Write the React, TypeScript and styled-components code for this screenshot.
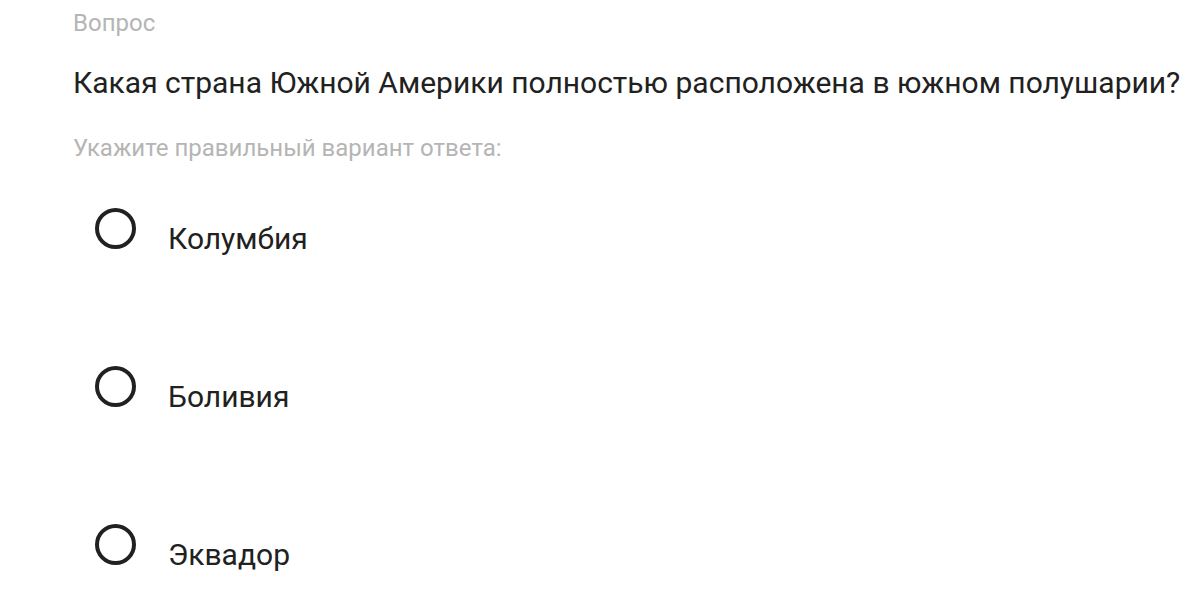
import React from "react";
import styled, { createGlobalStyle } from "styled-components";

const GlobalStyle = createGlobalStyle`
  body {
    margin: 0;
    background: #ffffff;
    font-family: Roboto, "Noto Sans", sans-serif;
  }
`;

const Page = styled.div`
  padding: 8px 0 0 73px;
`;

const Label = styled.div`
  font-size: 24px;
  line-height: 30px;
  color: #b5b5b5;
`;

const Question = styled.h1`
  margin: 27px 0 32px;
  font-size: 30px;
  font-weight: 400;
  line-height: 36px;
  color: #212121;
  white-space: nowrap;
`;

const Options = styled.div`
  display: flex;
  flex-direction: column;
  gap: 109px;
  margin-top: 45px;
  padding-left: 22px;
`;

const Option = styled.label`
  display: flex;
  align-items: flex-start;
  gap: 32px;
  cursor: pointer;
`;

const Radio = styled.span`
  width: 33px;
  height: 33px;
  border: 4px solid #212121;
  border-radius: 50%;
  flex-shrink: 0;
`;

const OptionText = styled.span`
  margin-top: 13px;
  font-size: 30px;
  line-height: 36px;
  color: #212121;
`;

const options = ["Колумбия", "Боливия", "Эквадор"];

export default function App() {
  return (
    <>
      <GlobalStyle />
      <Page>
        <Label>Вопрос</Label>
        <Question>
          Какая страна Южной Америки полностью расположена в южном полушарии?
        </Question>
        <Label>Укажите правильный вариант ответа:</Label>
        <Options>
          {options.map((o) => (
            <Option key={o}>
              <Radio />
              <OptionText>{o}</OptionText>
            </Option>
          ))}
        </Options>
      </Page>
    </>
  );
}
